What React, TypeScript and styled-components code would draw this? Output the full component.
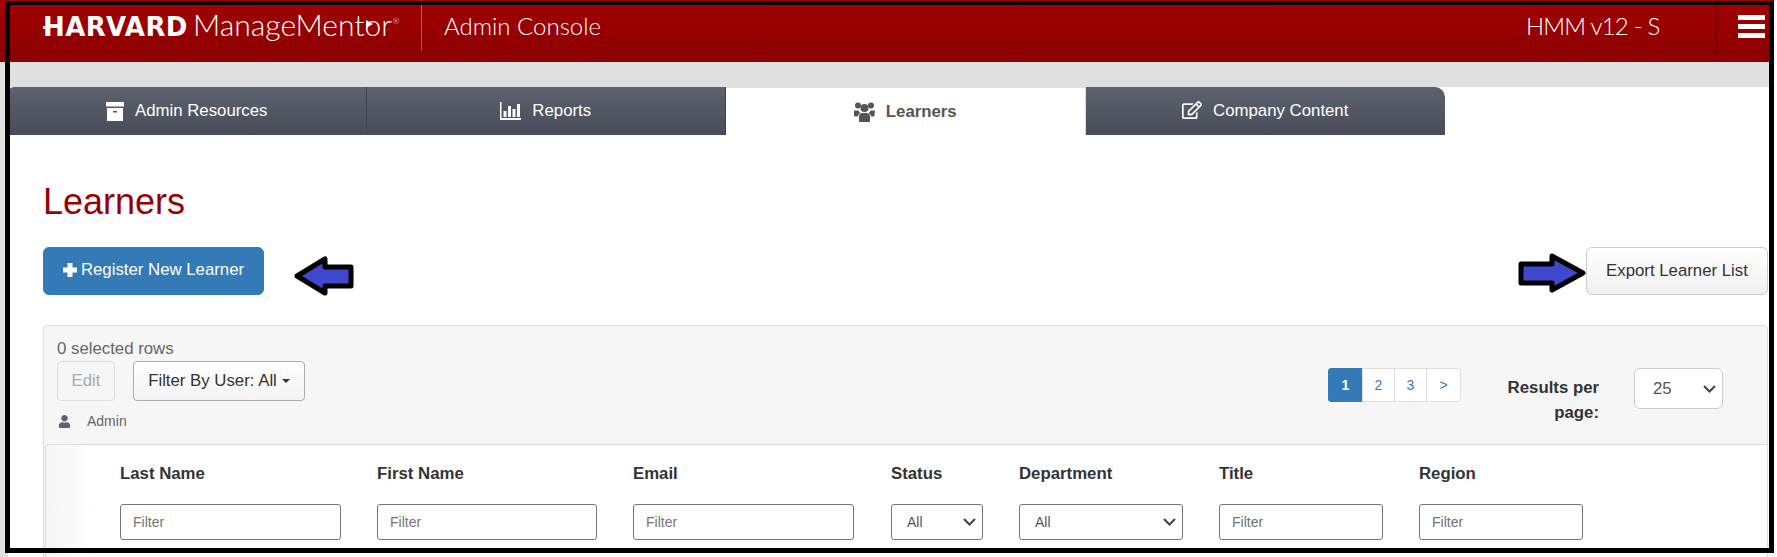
import React from "react";
import styled, { createGlobalStyle } from "styled-components";
import { FaRegEdit, FaUser } from "react-icons/fa";

const chevron =
  "url(\"data:image/svg+xml,%3Csvg xmlns='http://www.w3.org/2000/svg' width='13' height='8' viewBox='0 0 13 8'%3E%3Cpath d='M1 1l5.500 5.500L12 1' fill='none' stroke='%23444' stroke-width='2'/%3E%3C/svg%3E\")";

const GlobalStyle = createGlobalStyle`
  html, body {
    margin: 0;
    padding: 0;
    background: #fff;
  }
  * {
    box-sizing: border-box;
  }
`;

const Screen = styled.div`
  position: relative;
  width: 1777px;
  height: 557px;
  overflow: hidden;
  font-family: "Liberation Sans", Arial, sans-serif;
  font-size: 16.8px;
  color: #333;
`;

const Page = styled.div`
  width: 1774px;
  height: 557px;
  background: #e0e0e0;
  display: flex;
  flex-direction: column;
`;

const Header = styled.header`
  flex: none;
  height: 62px;
  padding-left: 43px;
  display: flex;
  align-items: flex-start;
  color: #fff;
  background: linear-gradient(#a30000, #8a0000);
`;

const Logo = styled.div`
  width: 379px;
  height: 51px;
  padding-top: 9px;
  display: flex;
  align-items: baseline;
  white-space: nowrap;
  border-right: 1px solid #b95555;
  line-height: 30px;
`;

const LogoHarvard = styled.span`
  position: relative;
  font-family: "DejaVu Sans", sans-serif;
  font-weight: 700;
  font-size: 26px;
  letter-spacing: 0.4px;
  width: 150px;
  &::before {
    content: "";
    position: absolute;
    left: 0;
    top: 14px;
    width: 6px;
    height: 3px;
    background: #fff;
  }
`;

const LogoMentor = styled.span`
  font-family: Lato, sans-serif;
  font-weight: 300;
  font-size: 30px;
`;

const LogoPlayO = styled.span`
  position: relative;
  &::after {
    content: "";
    position: absolute;
    left: 2px;
    top: 14px;
    border-left: 7px solid #fff;
    border-top: 4px solid transparent;
    border-bottom: 4px solid transparent;
  }
`;

const LogoMark = styled.sup`
  font-size: 8px;
  line-height: 0;
  margin-left: 1px;
  vertical-align: 12px;
`;

const HeaderTitle = styled.div`
  margin-left: 22px;
  padding-top: 11px;
  font-family: Lato, sans-serif;
  font-weight: 300;
  font-size: 24px;
  line-height: 30px;
`;

const Version = styled.div`
  margin-left: auto;
  width: 190px;
  padding-top: 11px;
  font-family: Lato, sans-serif;
  font-weight: 300;
  font-size: 24px;
  letter-spacing: -0.8px;
  line-height: 30px;
`;

const MenuButton = styled.div`
  width: 58px;
  height: 62px;
  padding: 15px 0 0 21px;
  border-left: 1px solid #7a0000;
  display: flex;
  flex-direction: column;
  gap: 4px;
`;

const MenuBar = styled.span`
  display: block;
  width: 27px;
  height: 5px;
  background: #fff;
`;

const Band = styled.div`
  flex: none;
  height: 25px;
`;

const Content = styled.main`
  flex: 1;
  margin-left: 8px;
  background: #fff;
  min-height: 0;
`;

const TabRow = styled.nav`
  display: flex;
  height: 48px;
`;

const Tab = styled.div<{ $active?: boolean }>`
  width: 359.5px;
  display: flex;
  align-items: center;
  justify-content: center;
  gap: 11px;
  color: ${({ $active }) => ($active ? "#555" : "#fff")};
  font-weight: ${({ $active }) => ($active ? 700 : 400)};
  background: ${({ $active }) =>
    $active ? "#fff" : "linear-gradient(#5c626f, #484c58)"};
  border-right: 1px solid ${({ $active }) => ($active ? "#ddd" : "#3f4450")};
  border-top: ${({ $active }) => ($active ? "1px solid #ddd" : "none")};
  &:first-child {
    width: 358.5px;
    border-top-left-radius: 6px;
  }
  &:last-child {
    border-right: none;
    border-top-right-radius: 10px;
  }
  svg {
    flex: none;
  }
`;

const EditGlyph = styled(FaRegEdit)`
  font-size: 20px;
  margin-top: -2px;
`;

const Section = styled.section`
  padding: 0 6px 0 35px;
`;

const Heading = styled.h1`
  margin: 0;
  padding-top: 46px;
  height: 112px;
  font-size: 36px;
  font-weight: 400;
  line-height: 42px;
  color: #990000;
`;

const ActionRow = styled.div`
  display: flex;
  justify-content: space-between;
  align-items: flex-start;
  height: 78px;
`;

const PrimaryButton = styled.button`
  width: 221px;
  height: 48px;
  padding: 0 0 2px;
  display: flex;
  align-items: center;
  justify-content: center;
  gap: 4px;
  border: 1px solid #337ab7;
  border-radius: 6px;
  background: #337ab7;
  color: #fff;
  font: inherit;
`;

const ExportButton = styled.button`
  width: 182px;
  height: 48px;
  padding: 0;
  border: 1px solid #ccc;
  border-radius: 6px;
  background: linear-gradient(#fff, #f0f0f0);
  color: #333;
  font: inherit;
`;

const Panel = styled.div`
  height: 300px;
  background: #f6f6f6;
  border: 1px solid #ddd;
  border-radius: 4px 4px 0 0;
`;

const PanelHead = styled.div`
  height: 118px;
  display: flex;
`;

const PanelLeft = styled.div`
  flex: 1;
  padding: 11px 0 0 13px;
`;

const SelectedCount = styled.div`
  height: 24px;
  line-height: 24px;
  color: #666;
`;

const ButtonRow = styled.div`
  display: flex;
  gap: 18px;
`;

const GhostButton = styled.button`
  width: 58px;
  height: 40px;
  padding: 0;
  border: 1px solid #ddd;
  border-radius: 4px;
  background: #f6f6f6;
  color: #aaa;
  font: inherit;
`;

const FilterButton = styled.button`
  width: 172px;
  height: 40px;
  padding: 0;
  display: flex;
  align-items: center;
  justify-content: center;
  gap: 5px;
  border: 1px solid #adadad;
  border-radius: 4px;
  background: linear-gradient(#fff, #f3f3f3);
  color: #333;
  font: inherit;
`;

const Caret = styled.span`
  border-top: 4px solid #333;
  border-left: 4px solid transparent;
  border-right: 4px solid transparent;
`;

const LegendRow = styled.div`
  display: flex;
  align-items: center;
  gap: 16px;
  height: 20px;
  margin-top: 10px;
  font-size: 14px;
  color: #666;
  svg {
    margin-left: 1px;
    font-size: 13px;
    color: #6b5b7b;
  }
`;

const PanelRight = styled.div`
  display: flex;
  align-items: flex-start;
  padding: 42px 44px 0 0;
`;

const Pager = styled.div`
  display: flex;
  height: 34px;
  border-radius: 4px;
  overflow: hidden;
`;

const PageLink = styled.span<{ $active?: boolean }>`
  width: ${({ $active }) => ($active ? "35px" : "33px")};
  margin-left: ${({ $active }) => ($active ? 0 : "-1px")};
  display: flex;
  align-items: center;
  justify-content: center;
  font-size: 14px;
  color: ${({ $active }) => ($active ? "#fff" : "#337ab7")};
  font-weight: ${({ $active }) => ($active ? 700 : 400)};
  background: ${({ $active }) => ($active ? "#337ab7" : "#fff")};
  border: 1px solid ${({ $active }) => ($active ? "#337ab7" : "#ddd")};
  &:last-child {
    width: 35px;
    border-radius: 0 4px 4px 0;
  }
`;

const PerPageLabel = styled.label`
  width: 92px;
  margin: 7px 0 0 46px;
  font-weight: 700;
  line-height: 25px;
  text-align: right;
`;

const PerPageSelect = styled.select`
  appearance: none;
  width: 89px;
  height: 41px;
  margin-left: 35px;
  padding-left: 18px;
  border: 1px solid #ccc;
  border-radius: 6px;
  background: #fff ${chevron} no-repeat right 6px center;
  color: #555;
  font: inherit;
`;

const TableArea = styled.div`
  margin-left: 1px;
  height: 200px;
  padding-left: 74px;
  border-top: 1px solid #ddd;
  border-left: 1px solid #ddd;
  border-top-left-radius: 4px;
  background: linear-gradient(90deg, #f5f5f5, #fff 50px);
`;

const FilterGrid = styled.div`
  display: grid;
  grid-template-columns: 257px 256px 258px 128px 200px 200px 200px;
  grid-template-rows: 59px 36px;
`;

const ColumnTitle = styled.div`
  font-weight: 700;
  line-height: 58px;
`;

const TextFilter = styled.input<{ $width: number }>`
  width: ${({ $width }) => $width}px;
  height: 36px;
  padding: 0 12px;
  border: 1px solid #767676;
  border-radius: 3px;
  background: #fff;
  font-family: inherit;
  font-size: 14px;
  &::placeholder {
    color: #757575;
  }
`;

const SelectFilter = styled.select<{ $width: number }>`
  appearance: none;
  width: ${({ $width }) => $width}px;
  height: 36px;
  padding-left: 15px;
  border: 1px solid #767676;
  border-radius: 3px;
  background: #fff ${chevron} no-repeat right 6px center;
  color: #555;
  font-family: inherit;
  font-size: 14px;
`;

const AnnotationFrame = styled.div`
  position: absolute;
  left: 5px;
  top: 1px;
  width: 1769px;
  height: 552px;
  border: 5px solid #000;
  border-top-width: 4px;
  pointer-events: none;
`;

const ArrowMark = styled.svg<{ $left: number; $top: number }>`
  position: absolute;
  left: ${({ $left }) => $left}px;
  top: ${({ $top }) => $top}px;
`;

const ArchiveIcon = () => (
  <svg width="18" height="19" viewBox="0 0 18 19">
    <path fill="currentColor" d="M0 0h18v4.500H0zM1 6h16v13H1z" />
    <path fill="#4f5460" d="M7 9h4v1.500H7z" />
  </svg>
);

const ChartIcon = () => (
  <svg width="21" height="18" viewBox="0 0 21 18">
    <path
      fill="currentColor"
      d="M0 0h1.500v16H21v2H0zM3.500 9h3v6h-3zM8 4h3v11H8zM12.500 7h3v8h-3zM17 2h3v13h-3z"
    />
  </svg>
);

const PeopleIcon = () => (
  <svg width="21" height="20" viewBox="0 0 21 20">
    <g fill="currentColor">
      <circle cx="4" cy="3.500" r="3" />
      <circle cx="17" cy="3.500" r="3" />
      <circle cx="10.500" cy="6" r="4" />
      <path d="M0 8.500h4.500c.3 1 1 2 2 2.500-1.500.8-2.500 2-2.700 3.500H1.500C.5 14.500 0 14 0 13zM21 8.500h-4.500c-.3 1-1 2-2 2.500 1.500.8 2.500 2 2.700 3.500h1.800c1 0 1.500-.5 1.500-1.500z" />
      <path d="M5 19v-4.500C5 12.500 6.500 11 8.500 11h4c2 0 3.500 1.500 3.500 3.500V19c0 .6-.4 1-1 1H6c-.6 0-1-.4-1-1z" />
    </g>
  </svg>
);

const PlusIcon = () => (
  <svg width="14" height="14" viewBox="0 0 14 14">
    <path fill="currentColor" d="M4.500 0h5v4.500H14v5H9.500V14h-5V9.500H0v-5h4.500z" />
  </svg>
);

const columns: { title: string; width: number; options?: boolean }[] = [
  { title: "Last Name", width: 221 },
  { title: "First Name", width: 220 },
  { title: "Email", width: 221 },
  { title: "Status", width: 92, options: true },
  { title: "Department", width: 164, options: true },
  { title: "Title", width: 164 },
  { title: "Region", width: 164 },
];

const App: React.FC = () => {
  return (
    <Screen>
      <GlobalStyle />
      <Page>
        <Header>
          <Logo>
            <LogoHarvard>HARVARD</LogoHarvard>
            <LogoMentor>
              ManageMent
              <LogoPlayO>o</LogoPlayO>r<LogoMark>®</LogoMark>
            </LogoMentor>
          </Logo>
          <HeaderTitle>Admin Console</HeaderTitle>
          <Version>HMM v12 - S</Version>
          <MenuButton>
            <MenuBar />
            <MenuBar />
            <MenuBar />
          </MenuButton>
        </Header>
        <Band />
        <Content>
          <TabRow>
            <Tab>
              <ArchiveIcon />
              Admin Resources
            </Tab>
            <Tab>
              <ChartIcon />
              Reports
            </Tab>
            <Tab $active>
              <PeopleIcon />
              Learners
            </Tab>
            <Tab>
              <EditGlyph />
              Company Content
            </Tab>
          </TabRow>
          <Section>
            <Heading>Learners</Heading>
            <ActionRow>
              <PrimaryButton>
                <PlusIcon />
                Register New Learner
              </PrimaryButton>
              <ExportButton>Export Learner List</ExportButton>
            </ActionRow>
            <Panel>
              <PanelHead>
                <PanelLeft>
                  <SelectedCount>0 selected rows</SelectedCount>
                  <ButtonRow>
                    <GhostButton disabled>Edit</GhostButton>
                    <FilterButton>
                      Filter By User: All
                      <Caret />
                    </FilterButton>
                  </ButtonRow>
                  <LegendRow>
                    <FaUser />
                    Admin
                  </LegendRow>
                </PanelLeft>
                <PanelRight>
                  <Pager>
                    <PageLink $active>1</PageLink>
                    <PageLink>2</PageLink>
                    <PageLink>3</PageLink>
                    <PageLink>&gt;</PageLink>
                  </Pager>
                  <PerPageLabel>Results per page:</PerPageLabel>
                  <PerPageSelect defaultValue="25">
                    <option>25</option>
                    <option>50</option>
                    <option>100</option>
                  </PerPageSelect>
                </PanelRight>
              </PanelHead>
              <TableArea>
                <FilterGrid>
                  {columns.map((col) => (
                    <ColumnTitle key={col.title}>{col.title}</ColumnTitle>
                  ))}
                  {columns.map((col) =>
                    col.options ? (
                      <SelectFilter key={col.title} $width={col.width}>
                        <option>All</option>
                      </SelectFilter>
                    ) : (
                      <TextFilter key={col.title} $width={col.width} placeholder="Filter" />
                    )
                  )}
                </FilterGrid>
              </TableArea>
            </Panel>
          </Section>
        </Content>
      </Page>
      <AnnotationFrame />
      <ArrowMark $left={293} $top={255} width={62} height={42} viewBox="0 0 62 42">
        <path
          d="M4 21 L32 4 L32 12 L58 12 L58 31 L32 31 L32 38 Z"
          fill="#3f48cc"
          stroke="#000"
          strokeWidth="5"
          strokeLinejoin="round"
        />
      </ArrowMark>
      <ArrowMark $left={1517} $top={252} width={70} height={42} viewBox="0 0 70 42">
        <path
          d="M66 21 L35 4 L35 12 L4 12 L4 31 L35 31 L35 38 Z"
          fill="#3f48cc"
          stroke="#000"
          strokeWidth="5"
          strokeLinejoin="round"
        />
      </ArrowMark>
    </Screen>
  );
};

export default App;
